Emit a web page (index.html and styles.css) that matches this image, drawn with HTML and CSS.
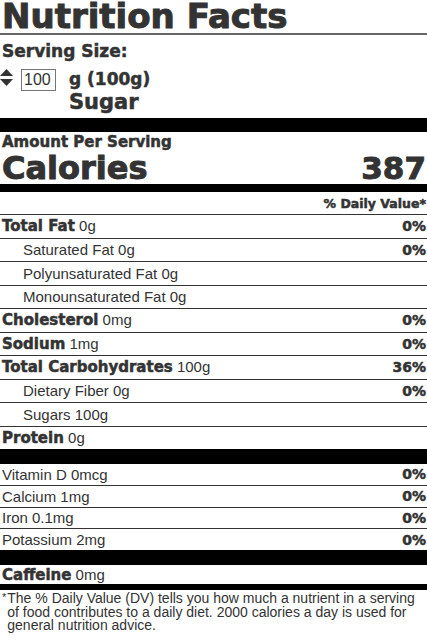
FILE: index.html
```html
<!DOCTYPE html>
<html lang="en">
<head>
    <meta charset="UTF-8">
    <meta name="viewport" content="width=device-width, initial-scale=1.0">
    <title>Nutrition Facts</title>
    <link rel="stylesheet" href="styles.css">
</head>
<body>
    <div class="label">
        <h1 class="title">Nutrition Facts</h1>

        <div class="serving">
            <div class="serving-head">Serving Size:</div>
            <div class="serving-row">
                <svg class="spinner" width="13" height="17" viewBox="0 0 13 17" aria-hidden="true">
                    <path d="M6.5 0 L13 7 L0 7 Z" fill="#333"/>
                    <path d="M0 10 L13 10 L6.5 17 Z" fill="#333"/>
                </svg>
                <input class="amount" type="text" value="100" aria-label="Serving amount">
                <div class="unit">
                    <div>g (100g)</div>
                    <div class="food">Sugar</div>
                </div>
            </div>
        </div>

        <div class="amount-per">Amount Per Serving</div>
        <div class="calories">
            <span>Calories</span>
            <span>387</span>
        </div>

        <div class="row dv-head"><span></span><b>% Daily Value*</b></div>

        <div class="row"><span><b>Total Fat</b> 0g</span><b class="pct">0%</b></div>
        <div class="row sub"><span>Saturated Fat 0g</span><b class="pct">0%</b></div>
        <div class="row sub"><span>Polyunsaturated Fat 0g</span></div>
        <div class="row sub"><span>Monounsaturated Fat 0g</span></div>
        <div class="row"><span><b>Cholesterol</b> 0mg</span><b class="pct">0%</b></div>
        <div class="row"><span><b>Sodium</b> 1mg</span><b class="pct">0%</b></div>
        <div class="row"><span><b>Total Carbohydrates</b> 100g</span><b class="pct">36%</b></div>
        <div class="row sub"><span>Dietary Fiber 0g</span><b class="pct">0%</b></div>
        <div class="row sub"><span>Sugars 100g</span></div>
        <div class="row thick"><span><b>Protein</b> 0g</span></div>

        <div class="row vit"><span>Vitamin D 0mcg</span><b class="pct">0%</b></div>
        <div class="row vit"><span>Calcium 1mg</span><b class="pct">0%</b></div>
        <div class="row vit"><span>Iron 0.1mg</span><b class="pct">0%</b></div>
        <div class="row vit thick"><span>Potassium 2mg</span><b class="pct">0%</b></div>

        <div class="row caffeine"><span><b>Caffeine</b> 0mg</span></div>

        <p class="footnote"><sup>*</sup><span>The % Daily Value (DV) tells you how much a nutrient in a serving of food contributes to a daily diet. 2000 calories a day is used for general nutrition advice.</span></p>
    </div>
</body>
</html>
```

FILE: styles.css
```css
body {
    margin: 0;
    background: #fff;
    color: #333;
    font-family: "Liberation Sans", Arial, sans-serif;
}

.label {
    width: 427px;
}

b,
.title,
.serving,
.amount-per,
.calories {
    font-family: "DejaVu Sans", sans-serif;
    font-weight: bold;
    -webkit-text-stroke: 0.5px currentColor;
}

.title,
.calories {
    -webkit-text-stroke: 1px currentColor;
}

.title {
    margin: 0;
    padding: 0 2px 1px;
    font-size: 34px;
    line-height: 32px;
    border-bottom: 2px solid #666;
}

.serving {
    padding: 6px 2px 6px;
    border-bottom: 14px solid #000;
}

.serving-head {
    font-size: 17px;
    line-height: 20px;
}

.serving-row {
    display: flex;
    align-items: flex-start;
    margin-top: 8px;
}

.spinner {
    margin: 0 0 0 -2px;
}

.amount {
    width: 35px;
    height: 22px;
    margin-left: 8px;
    padding: 0 2px;
    box-sizing: border-box;
    border: 1px solid #777;
    font-family: "Liberation Sans", Arial, sans-serif;
    font-weight: normal;
    font-size: 16px;
    color: #333;
    -webkit-text-stroke: 0;
}

.unit {
    margin: 1px 0 0 13px;
    font-size: 17px;
    line-height: 18px;
}

.unit .food {
    margin-top: 4px;
    font-size: 21px;
    line-height: 20px;
}

.amount-per {
    padding: 1px 2px 0;
    font-size: 15px;
    line-height: 18px;
}

.calories {
    display: flex;
    justify-content: space-between;
    padding: 1px 1px 0 2px;
    font-size: 32px;
    line-height: 32px;
    border-bottom: 8px solid #000;
}

.calories span:last-child {
    font-size: 31px;
}

.row {
    display: flex;
    justify-content: space-between;
    align-items: center;
    height: 22.5px;
    padding: 0 1px 0 2px;
    border-bottom: 1px solid #333;
    font-size: 15px;
}

.row b {
    font-size: 15px;
}

.row .pct {
    font-size: 14px;
}

.dv-head {
    height: 22px;
}

.dv-head b {
    font-size: 12.5px;
}

.sub span {
    padding-left: 21px;
}

.thick {
    border-bottom: 15px solid #000;
}

.vit {
    height: 20.75px;
}

.caffeine {
    height: 19px;
    border-bottom: 6px solid #000;
}

.footnote {
    display: flex;
    margin: 2px 0 0;
    padding: 0 8px 0 2px;
    font-size: 14px;
    line-height: 13.5px;
    color: #333;
}

.footnote sup {
    font-size: 11px;
    line-height: 10px;
    margin-right: 1px;
}
```
